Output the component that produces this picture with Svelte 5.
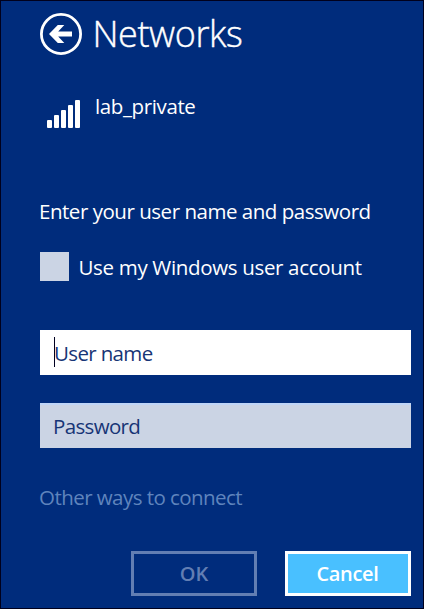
<script>
  const bars = [8, 13, 18, 23, 28];
</script>

<main class="panel">
  <header>
    <button class="back" aria-label="Back">
      <svg width="42" height="42" viewBox="0 0 42 42">
        <circle cx="21" cy="21" r="19.6" fill="none" stroke="#fff" stroke-width="2.8" />
        <path d="M9 21 17.8 12H24.3L18.2 18.5H32V23.5H18.2L24.3 30H17.8Z" fill="#fff" />
      </svg>
    </button>
    <h1>Networks</h1>
  </header>

  <section class="network">
    <svg width="33" height="28" viewBox="0 0 33 28" aria-hidden="true">
      {#each bars as h, i}
        <rect x={i * 7} y={28 - h} width="5" height={h} rx="1" fill="#fff" />
      {/each}
    </svg>
    <span class="ssid">lab_private</span>
  </section>

  <p class="prompt">Enter your user name and password</p>

  <div class="check">
    <span class="box" role="checkbox" aria-checked="false" aria-label="Use my Windows user account" tabindex="0"></span>
    <span class="account">Use my Windows user account</span>
  </div>

  <div class="field user"><i class="caret"></i><span>User name</span></div>
  <div class="field pass"><span>Password</span></div>

  <div class="other"><span>Other ways to connect</span></div>

  <footer>
    <button class="ok" disabled><span>OK</span></button>
    <button class="cancel"><span>Cancel</span></button>
  </footer>
</main>

<style>
  :global(body) { margin: 0; }
  .panel {
    box-sizing: border-box;
    width: 424px;
    height: 609px;
    padding: 12px 12px 0 39px;
    border: 1px solid #00001c;
    background: #002c7c;
    color: #fff;
    font: 20.5px/26px "Open Sans", "Noto Sans", sans-serif;
    overflow: hidden;
    white-space: nowrap;
  }
  button {
    box-sizing: border-box;
    margin: 0;
    padding: 0;
    background: none;
    border: 0;
    font: inherit;
    color: inherit;
  }
  svg { display: block; }
  header { display: flex; height: 42px; }
  .back { width: 42px; height: 42px; }
  h1 {
    margin: 0 0 0 10.5px;
    font-size: 36px;
    font-weight: 300;
    line-height: 42px;
    letter-spacing: -0.4px;
    -webkit-text-stroke: 0.4px #fff;
  }
  .network { display: flex; margin-top: 38px; padding-left: 7px; height: 35px; }
  .network svg { margin-top: 7px; }
  .ssid { margin-left: 15px; letter-spacing: -0.38px; }
  .prompt { margin: 70px 0 0 -1px; height: 28px; letter-spacing: -0.47px; }
  .check { display: flex; margin-top: 26px; height: 29px; }
  .box { width: 29px; height: 29px; background: #cbd4e4; }
  .account { margin-left: 9.5px; line-height: 31px; letter-spacing: -0.33px; }
  .field {
    box-sizing: border-box;
    display: flex;
    align-items: center;
    width: 371px;
    height: 45px;
    color: #173576;
  }
  .user { margin-top: 49px; padding-left: 13px; background: #fff; }
  .pass { margin-top: 28px; padding: 0 0 1px 13px; background: #cbd4e4; border-top: 2px solid #bfd5f7; }
  .field span { letter-spacing: -0.65px; }
  .caret { width: 1px; height: 30px; margin: -1px -1px 0 1px; background: #000020; }
  .other { margin: 36px 0 0 -1px; height: 28px; color: #5f84bd; letter-spacing: -0.55px; }
  footer { display: flex; justify-content: flex-end; gap: 28px; margin-top: 39px; }
  footer button { width: 126px; height: 45px; border: 3px solid #627eb3; font-size: 20px; font-weight: 600; }
  .ok { color: #627eb3; }
  footer .cancel { padding: 1px 1px 0 0; background: #49c0ff; border-color: #fff; letter-spacing: -0.3px; }
  .ok { padding-top: 1px; }
</style>
